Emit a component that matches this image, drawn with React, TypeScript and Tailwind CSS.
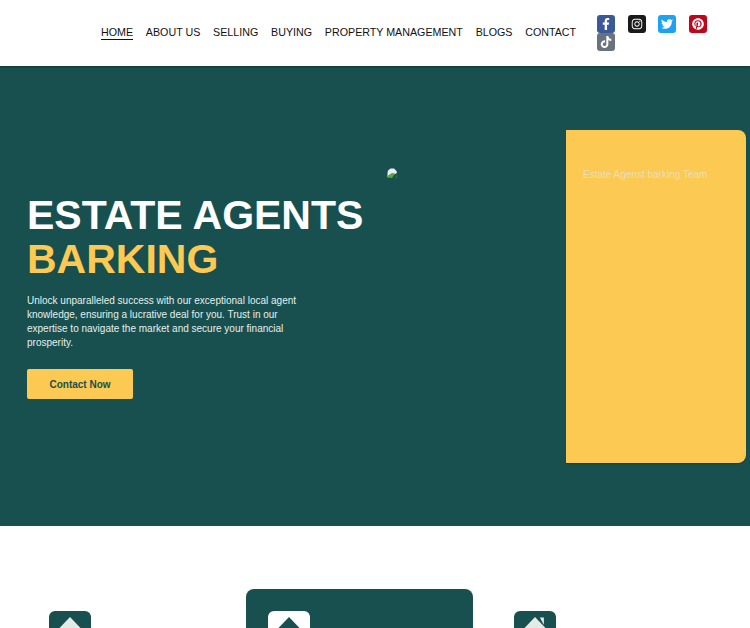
import { FaFacebookF, FaInstagram, FaPinterest, FaTiktok, FaTwitter } from 'react-icons/fa';

const navItems = ['HOME', 'ABOUT US', 'SELLING', 'BUYING', 'PROPERTY MANAGEMENT', 'BLOGS', 'CONTACT'];

function HouseIcon({ className, chimney }: { className: string; chimney?: boolean }) {
  return (
    <svg viewBox="0 0 42 42" className={className} fill="currentColor">
      <path d="M21 0 L42 22 L36 22 L36 42 L6 42 L6 22 L0 22 Z" />
      {chimney ? <path d="M27 0.5 L32 0.5 L32 10 Z" /> : null}
    </svg>
  );
}

function BrokenImage() {
  return (
    <svg viewBox="0 0 11 11" className="w-[11px] h-[11px]">
      <path d="M0.5 5 L1 2.5 L3.5 0.5 L7 0.5 L9.5 3 L10 5 L1 9.5 L0.5 9 Z" fill="#e8eef2" />
      <path d="M1 9.5 L1 7.5 L5 5 L8 5.5 L5 10 Z" fill="#5aa63c" />
      <path d="M7 10 L10 6 L10.5 10 Z" fill="#1f6b3f" />
    </svg>
  );
}

export default function App() {
  return (
    <div className="h-[628px] overflow-hidden bg-white font-['Liberation_Sans',sans-serif]">
      <header className="relative z-10 flex h-[66px] items-start shadow-[0_1px_2px_rgba(0,0,0,0.35)] bg-white">
        <nav className="ml-[101px] mt-[25px] flex gap-[12.8px] whitespace-nowrap text-[10.7px] leading-[14px] text-[#111]">
          {navItems.map((item, i) => (
            <a key={item} className={i === 0 ? 'border-b border-[#111]' : ''}>
              {item}
            </a>
          ))}
        </nav>
        <div className="absolute left-[597px] top-[15px] flex w-[125px] flex-wrap gap-x-[12.7px]">
          <span className="flex h-[18px] w-[18px] items-center justify-center rounded-[3px] bg-[#3b5998] text-[12px] text-white"><FaFacebookF /></span>
          <span className="flex h-[18px] w-[18px] items-center justify-center rounded-[3px] bg-[#1a1a1a] text-[12px] text-white"><FaInstagram /></span>
          <span className="flex h-[18px] w-[18px] items-center justify-center rounded-[3px] bg-[#1da1f2] text-[12px] text-white"><FaTwitter /></span>
          <span className="flex h-[18px] w-[18px] items-center justify-center rounded-[3px] bg-[#bd081c] text-[12px] text-white"><FaPinterest /></span>
          <span className="flex h-[18px] w-[18px] items-center justify-center rounded-[3px] bg-[#69727d] text-[12px] text-white"><FaTiktok /></span>
        </div>
      </header>

      <section className="flex h-[460px] items-center bg-[#185050] pl-[27px] pr-[4px]">
        <div className="w-[360px]">
          <h1 className="text-[41px] font-bold leading-[44px] text-white">
            ESTATE AGENTS
            <br />
            <span className="text-[#fcc952]">BARKING</span>
          </h1>
          <p className="mt-[13px] w-[290px] text-[10px] leading-[14px] text-[#e6efec]">
            Unlock unparalleled success with our exceptional local agent knowledge, ensuring a lucrative deal for you. Trust in our expertise to navigate the market and secure your financial prosperity.
          </p>
          <a className="mt-[19px] flex h-[30px] w-[106px] items-center justify-center rounded-[2px] bg-[#fcc952] text-[10px] font-bold text-[#185050]">
            Contact Now
          </a>
        </div>
        <div className="flex h-[333px] w-[179px] items-start pt-[38px]">
          <BrokenImage />
        </div>
        <div className="h-[333px] w-[180px] rounded-r-[8px] bg-[#fcc952] px-[17px] pt-[39px] text-[10px] leading-[12px] text-[#ecdfb8] shadow-[0_1px_1px_rgba(0,0,0,0.3)]">
          Estate Agenst barking Team
        </div>
      </section>

      <section className="grid grid-cols-[196.5px_227px_1fr] gap-x-[22px] pt-[63px] pl-[27px]">
        <div className="pl-[22px] pt-[22px]">
          <div className="h-[42px] w-[42px] overflow-hidden rounded-[6px] bg-[#185050] pt-[6px] text-[#e3ebe7]">
            <HouseIcon className="mx-auto h-[34px] w-[34px]" />
          </div>
        </div>
        <div className="h-[200px] rounded-[8px] bg-[#185050] pl-[22px] pt-[22px]">
          <div className="h-[42px] w-[42px] overflow-hidden rounded-[6px] bg-white pt-[6px] text-[#185050]">
            <HouseIcon className="mx-auto h-[34px] w-[34px]" />
          </div>
        </div>
        <div className="pl-[19px] pt-[22px]">
          <div className="h-[42px] w-[42px] overflow-hidden rounded-[6px] bg-[#185050] pt-[6px] text-[#e3ebe7]">
            <HouseIcon chimney className="mx-auto h-[34px] w-[34px]" />
          </div>
        </div>
      </section>
    </div>
  );
}
